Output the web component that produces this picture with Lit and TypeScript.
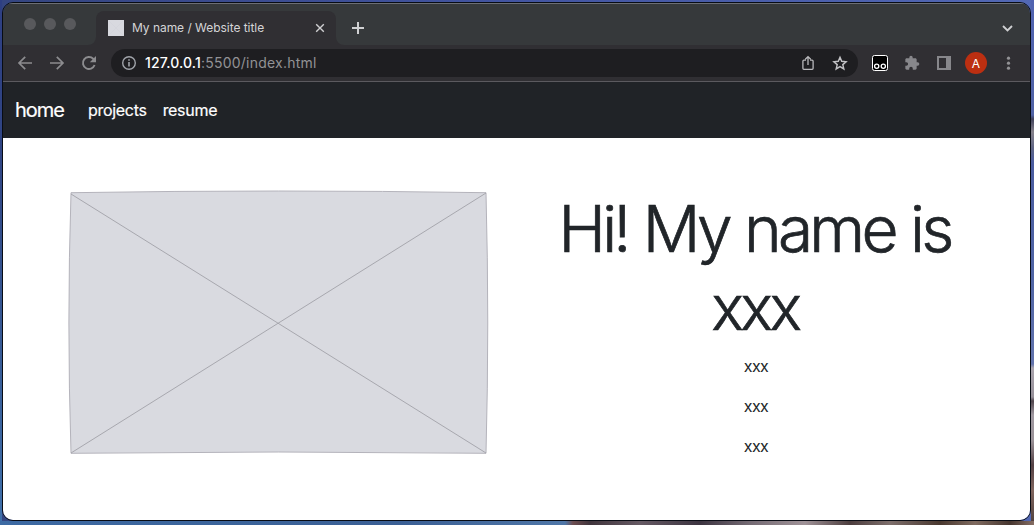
import { LitElement, html, css } from "lit";
import { customElement } from "lit/decorators.js";

@customElement("browser-tabs")
class BrowserTabs extends LitElement {
  static styles = css`
    :host { display: flex; height: 42px; box-sizing: border-box; background: #36393b; border-top: 1px solid #6c6e74; font-family: Inter, "Liberation Sans", sans-serif; }
    .lights { display: flex; gap: 8px; padding: 14px 0 0 21px; width: 64px; }
    .light { width: 12px; height: 12px; border-radius: 50%; background: #58595c; }
    .tab { display: flex; align-items: center; box-sizing: border-box; width: 240px; height: 34px; margin-top: 7px; padding: 0 10px 0 12px; border-radius: 8px 8px 0 0; background: #302f33; }
    .favicon { width: 16px; height: 16px; background: #d8d9df; }
    .title { flex: 1; margin: -1px 0 0 8px; font-size: 12px; letter-spacing: -0.04px; color: #d4d4d6; white-space: nowrap; }
    .foot { width: 8px; height: 8px; align-self: flex-end; }
    .plus { margin: 17px 0 0 7px; width: 14px; height: 14px; }
    .spacer { flex: 1; }
    .chevron { margin: 19px 17px 0 0; width: 11px; height: 10px; }
    svg { display: block; }
  `;
  render() {
    return html`
      <div class="lights"><i class="light"></i><i class="light"></i><i class="light"></i></div>
      <svg class="foot" viewBox="0 0 8 8"><path fill="#302f33" d="M8 0v8H0a8 8 0 0 0 8-8z" /></svg>
      <div class="tab">
        <svg class="favicon" viewBox="0 0 16 16"><path d="M0 0l16 16M16 0L0 16" stroke="#d0d1d8" stroke-width=".5" /></svg>
        <span class="title">My name / Website title</span>
        <svg width="12" height="12" viewBox="0 0 12 12"><path d="M2.2 2.2l7.6 7.6M9.8 2.2L2.2 9.8" stroke="#cfcfd1" stroke-width="1.4" /></svg>
      </div>
      <svg class="foot" viewBox="0 0 8 8"><path fill="#302f33" d="M0 0v8h8a8 8 0 0 1-8-8z" /></svg>
      <svg class="plus" viewBox="0 0 14 14"><path d="M7 1v12M1 7h12" stroke="#d0d1d3" stroke-width="2" /></svg>
      <div class="spacer"></div>
      <svg class="chevron" viewBox="0 0 11 10"><path d="M1 3l4.5 4.5L10 3" fill="none" stroke="#cfd0d2" stroke-width="1.8" /></svg>
    `;
  }
}

@customElement("browser-toolbar")
class BrowserToolbar extends LitElement {
  static styles = css`
    :host { display: flex; align-items: center; height: 37px; box-sizing: border-box; background: #302f33; border-bottom: 1px solid #5b5a5f; font-family: Inter, "Liberation Sans", sans-serif; }
    svg { display: block; flex: none; }
    .nav { display: flex; gap: 16px; padding-left: 14px; width: 94px; }
    .address { display: flex; align-items: center; box-sizing: border-box; width: 747px; height: 28px; padding: 0 10px; border-radius: 14px; background: #1e1e21; }
    .url { flex: 1; margin: -1px 0 0 8px; font-size: 14px; letter-spacing: 0.23px; color: #929295; white-space: nowrap; }
    .host { color: #fff; font-weight: 500; letter-spacing: 0.15px; }
    .page-actions { display: flex; gap: 16px; }
    .actions { display: flex; align-items: center; gap: 16px; padding-left: 14px; }
    .avatar { display: flex; align-items: center; justify-content: center; width: 22px; height: 22px; margin: 0 -3px; border-radius: 50%; background: #bc2f11; color: #fff; font-size: 12px; }
  `;
  render() {
    return html`
      <div class="nav">
        <svg width="16" height="16" viewBox="0 0 16 16" fill="none" stroke="#8c8c8f" stroke-width="1.7"><path d="M15 8H2.200M8.200 1.800L2 8l6.200 6.200" /></svg>
        <svg width="16" height="16" viewBox="0 0 16 16" fill="none" stroke="#8c8c8f" stroke-width="1.7"><path d="M1 8h12.800M7.800 1.800L14 8l-6.200 6.200" /></svg>
        <svg width="16" height="16" viewBox="0 0 16 16"><path d="M13.600 10A6 6 0 1 1 12.200 3.750L13.500 5" fill="none" stroke="#8c8c8f" stroke-width="1.900" /><path d="M15 1V7.200H8.800z" fill="#8c8c8f" /></svg>
      </div>
      <div class="address">
        <svg width="16" height="16" viewBox="0 0 16 16"><circle cx="8" cy="8" r="6.3" fill="none" stroke="#a0a4aa" stroke-width="1.4" /><path d="M8 7v4.6M8 4.2v1.6" stroke="#a0a4aa" stroke-width="1.6" /></svg>
        <span class="url"><span class="host">127.0.0.1</span>:5500/index.html</span>
        <div class="page-actions">
          <svg width="16" height="16" viewBox="0 0 16 16" fill="none" stroke="#b9b9bc" stroke-width="1.3"><path d="M6 5.2H3.900a1 1 0 0 0-1 1v7.100a1 1 0 0 0 1 1h8.200a1 1 0 0 0 1-1V6.200a1 1 0 0 0-1-1H10M8 10V2M5.300 4.300L8 1.600l2.700 2.700" /></svg>
          <svg width="16" height="16" viewBox="0 0 16 16"><path d="M8 2.300l1.700 4 4.400.4-3.300 2.900 1 4.300L8 11.600l-3.800 2.300 1-4.300-3.300-2.900 4.400-.4z" fill="none" stroke="#c2c2c5" stroke-width="1.450" /></svg>
        </div>
      </div>
      <div class="actions">
        <svg width="16" height="16" viewBox="0 0 16 16"><rect x=".5" y=".5" width="15" height="15" rx="2" fill="#000" stroke="#fff" /><g fill="#000" stroke="#fff" stroke-width="1.300"><circle cx="4.700" cy="11.200" r="2.100" /><circle cx="11.300" cy="11.200" r="2.100" /></g></svg>
        <svg width="16" height="16" viewBox="0 0 24 24"><path fill="#87878b" d="M20.500 11H19V7c0-1.100-.9-2-2-2h-4V3.500a2.500 2.500 0 0 0-5 0V5H4c-1.100 0-2 .9-2 2v3.800h1.500a2.700 2.700 0 0 1 0 5.400H2V20c0 1.100.9 2 2 2h3.800v-1.500a2.700 2.700 0 0 1 5.400 0V22H17c1.100 0 2-.9 2-2v-4h1.500a2.500 2.500 0 0 0 0-5z" /></svg>
        <svg width="16" height="16" viewBox="0 0 16 16"><path fill="#87878b" fill-rule="evenodd" d="M1 1h14v14H1zM3 3v10h7V3z" /></svg>
        <span class="avatar">A</span>
        <svg width="16" height="16" viewBox="0 0 16 16" fill="#939396"><circle cx="8.500" cy="3.200" r="1.600" /><circle cx="8.500" cy="8.200" r="1.600" /><circle cx="8.500" cy="13.200" r="1.600" /></svg>
      </div>
    `;
  }
}

@customElement("home-page")
class HomePage extends LitElement {
  static styles = css`
    :host { display: flex; flex-direction: column; flex: 1; background: #fff; color: #212529; font-family: Inter, "Liberation Sans", sans-serif; }
    .navbar { display: flex; align-items: center; height: 56px; padding-left: 12px; background: #202327; color: #fff; -webkit-text-stroke: 0.2px #fff; }
    .brand { width: 73px; font-size: 20px; letter-spacing: -1px; }
    .link { font-size: 16px; letter-spacing: -0.300px; margin-right: 16px; }
    .hero { display: flex; padding: 51px 0 0 64px; }
    .picture { display: block; width: 424px; height: 266px; }
    .intro { width: 530px; text-align: center; }
    h1 { margin: 0 0 7px; font-size: 64px; font-weight: 300; line-height: 79px; letter-spacing: -3.750px; word-spacing: 1px; -webkit-text-stroke: 0.7px #212529; }
    .line { display: block; margin-right: 3px; }
    .short { font-size: 61.500px; letter-spacing: -3.400px; margin-right: 2px; }
    p { margin: 0 0 16px; font-size: 16px; line-height: 24px; letter-spacing: -0.600px; }
  `;
  render() {
    return html`
      <nav class="navbar"><span class="brand">home</span><span class="link">projects</span><span class="link">resume</span></nav>
      <main class="hero">
        <svg class="picture" viewBox="0 0 424 266">
          <path d="M4 3.700Q212 .3 419 3.700Q422.500 134 419 264.300Q212 261.700 4 264.300Q-.2 134 4 3.700z" fill="#d9dae0" stroke="#b4b3bb" stroke-width="1" />
          <path d="M4 5L419 264M419 4L4 264" stroke="#a2a2a8" stroke-width=".9" />
        </svg>
        <div class="intro">
          <h1><span class="line">Hi! My name is</span><span class="line short">xxx</span></h1>
          <p>xxx</p><p>xxx</p><p>xxx</p>
        </div>
      </main>
    `;
  }
}

@customElement("app-root")
class AppRoot extends LitElement {
  static styles = css`
    :host {
      display: block; box-sizing: border-box; width: 1034px; height: 525px; padding: 2px 3px 4px 2px;
      background:
        linear-gradient(90deg, #3d6aa3 0, #3b6095 400px, #5077a8 565px, #6d4d50 573px, #40343c 590px, #665a64 640px, #3c3440 700px, #756b74 750px, #a09398 805px, #4c3d3e 850px, #7e6f6c 890px, #49382f 940px, #806b60 975px, #46352f 1010px, #866e64) 0 100% / 100% 4px no-repeat,
        linear-gradient(180deg, #5063b1 0, #5062a5 115px, #40415a 119px, #85818b 132px, #5f6584 148px, #4a5ca0 163px, #5065a5 280px, #6273ac 364px, #aaa4ad 368px, #969099 397px, #50454c 401px, #a099a1 415px, #9a9298 440px, #544044 465px, #80665f 490px, #4d3e3b) 100% 0 / 3px 100% no-repeat,
        linear-gradient(180deg, #2e3f83 0, #304584 150px, #375b96 350px, #3f70aa) 0 0 / 2px 100% no-repeat,
        linear-gradient(90deg, #344580, #4254a0 500px, #5268b4);
    }
    .window { display: flex; flex-direction: column; box-sizing: border-box; height: 519px; border: 1px solid #080c14; border-radius: 11px; overflow: hidden; }
  `;
  render() {
    return html`<div class="window"><browser-tabs></browser-tabs><browser-toolbar></browser-toolbar><home-page></home-page></div>`;
  }
}
